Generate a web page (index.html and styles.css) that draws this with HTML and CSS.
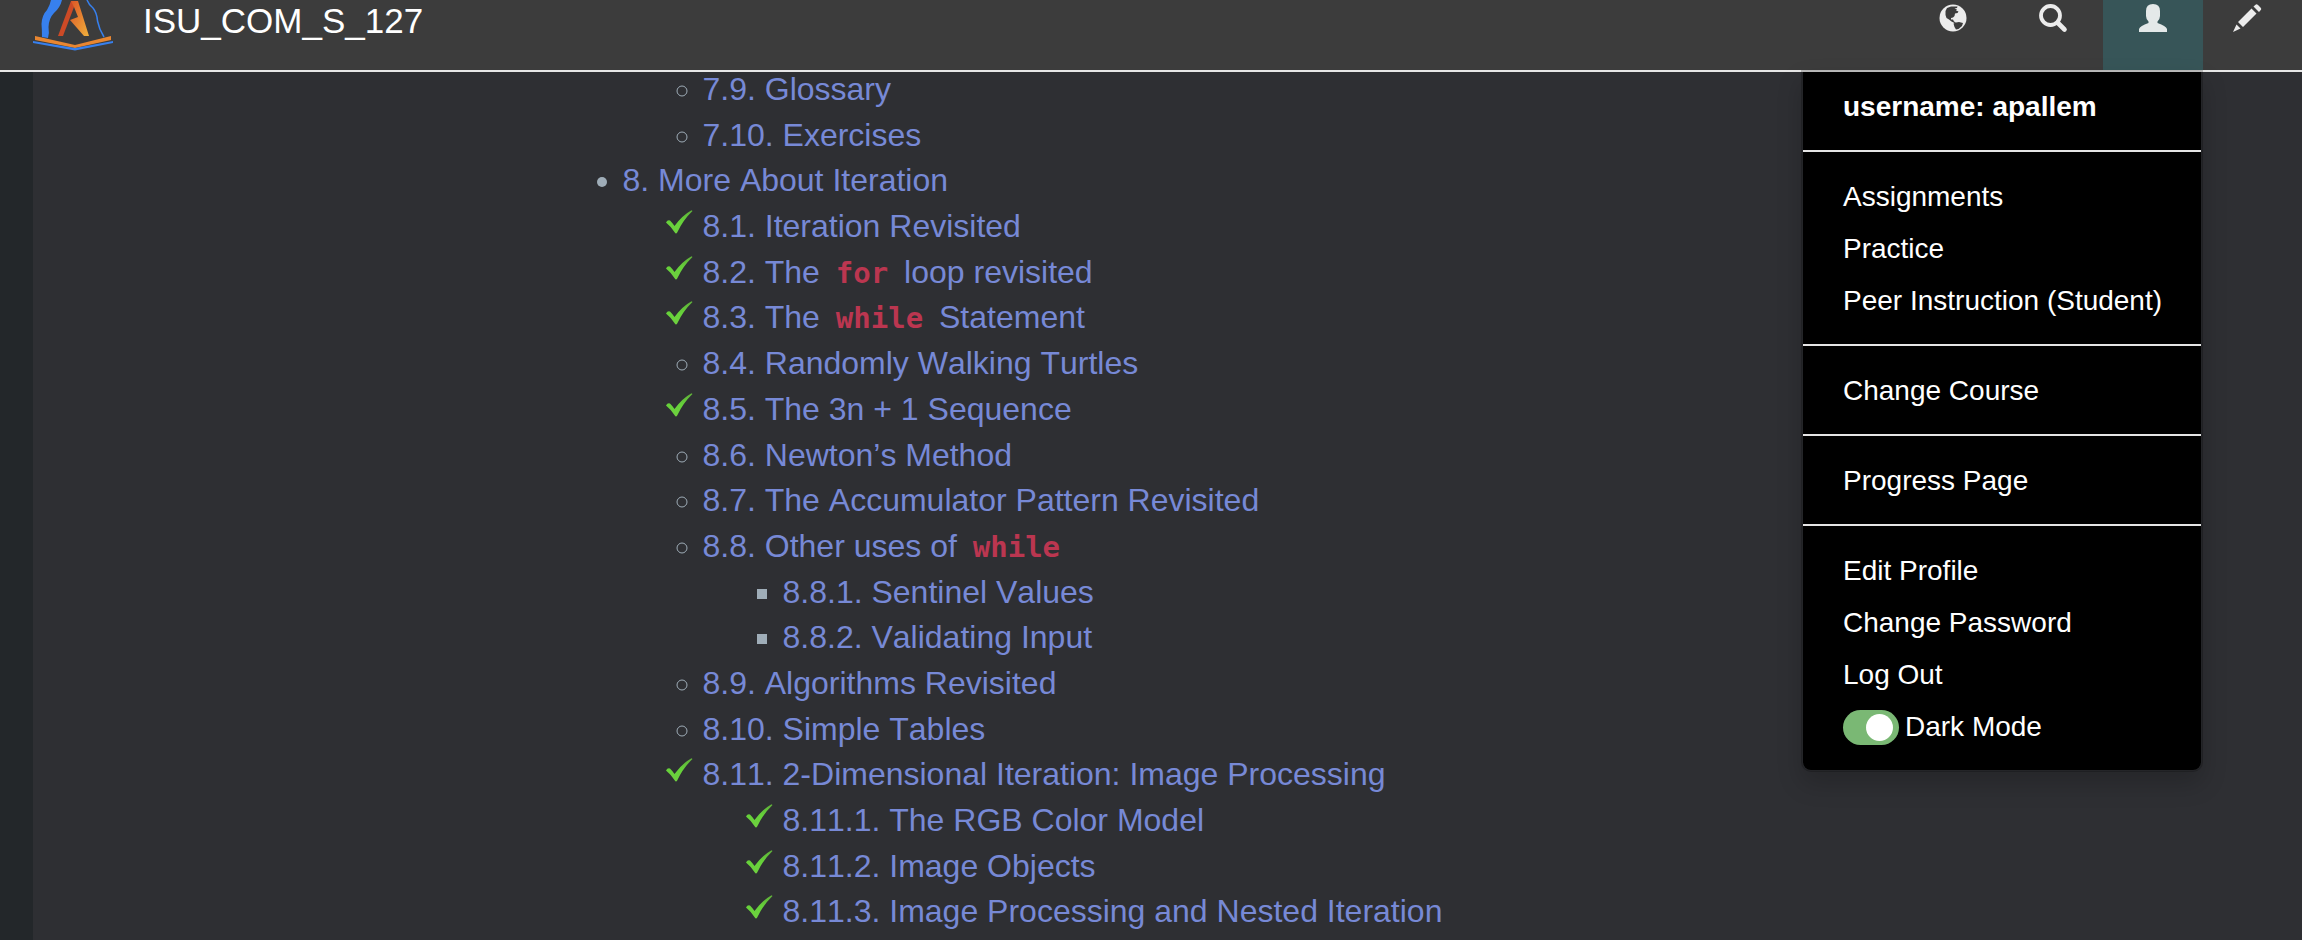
FILE: index.html
```html
<!DOCTYPE html>
<html lang="en">
<head>
<meta charset="utf-8">
<title>ISU_COM_S_127</title>
<link rel="stylesheet" href="styles.css">
</head>
<body>
<svg class="sprite" aria-hidden="true">
  <defs>
    <linearGradient id="check-fill" x1="0" y1="0" x2="0" y2="1">
      <stop offset="0" stop-color="#5fae3a"/>
      <stop offset="0.5" stop-color="#66d23a"/>
      <stop offset="1" stop-color="#6fd040"/>
    </linearGradient>
    <symbol id="check" viewBox="0 0 28 26">
      <path fill="url(#check-fill)" d="M1 13.500Q2.500 10.500 5 11.500Q7.500 14 9.500 17Q17 6.500 26.500 1.200L27.500 2Q18 11 12.200 23.500Q11 25.500 9.800 23.500Q6 17.500 1 13.500Z"/>
    </symbol>
  </defs>
</svg>

<header class="navbar">
  <a class="brand" href="#">
    <svg class="brand-logo" viewBox="0 0 80 52" aria-hidden="true">
      <defs>
        <linearGradient id="leg" x1="0" y1="0" x2="1" y2="1">
          <stop offset="0" stop-color="#dd5526"/>
          <stop offset="1" stop-color="#efb03c"/>
        </linearGradient>
      </defs>
      <path fill="#3780ee" d="M18 0H29Q27 8 21 13Q16 18 15.500 27Q16.500 33 15 38L9 37Q9 30 8.500 24Q9 15 14 10Q17 5 18 0Z"/>
      <path fill="none" stroke="#3780ee" stroke-width="1.500" d="M54 0Q56 5 60 8Q64 13 64.500 21Q66 29 71 37"/>
      <path fill="#cc4a26" d="M38 1H43L41 7L30 36H25Z"/>
      <path fill="url(#leg)" d="M38 1H45L56 36H51L37 20L45 17L41 7Z"/>
      <path fill="#e88631" d="M2 36L42 45L78 36V40L42 48L2 40Z"/>
      <path fill="#3780ee" d="M0 41L42 48L80 41V43L42 50.500L0 43Z"/>
    </svg>
    <span>ISU_COM_S_127</span>
  </a>
  <nav class="tools" aria-label="Tools">
    <button class="tool" type="button" aria-label="Social">
      <svg viewBox="0 0 28 28" aria-hidden="true">
        <circle cx="14" cy="14" r="13.500" fill="#ececec"/>
        <path fill="#3c3c3c" d="M8 4L12 2.500L18.500 2.500L18 4L15.500 4.500L18 5.500L17 6.500L19.500 7.500L18.500 9L16 9.500L15.500 12L14 13.500L12 14L12 15.500L14 15.500L15 17.500L17 18.500L15.500 19L12.500 17.500L10 15.500L7.500 14L6.500 11L6.500 7Z"/>
        <path fill="#3c3c3c" d="M14.500 19.500L17 18.500L20 18L24 19L23 22L19.500 25L17 25.500L15.500 23Z"/>
      </svg>
    </button>
    <button class="tool" type="button" aria-label="Search">
      <svg viewBox="0 0 28 28" aria-hidden="true">
        <circle cx="11.500" cy="11.500" r="9.500" fill="none" stroke="#ececec" stroke-width="3.800"/>
        <path fill="none" stroke="#ececec" stroke-width="4.600" stroke-linecap="round" d="M19 19L25.500 25.500"/>
      </svg>
    </button>
    <button class="tool tool-open" type="button" aria-label="User menu" aria-expanded="true">
      <svg viewBox="0 0 28 28" aria-hidden="true">
        <path fill="#e4e9e9" d="M7 7Q7 0 14 0Q21 0 21 7V12Q21 15 18.500 17.500V19Q27 22 28 25V28H0V25Q1 22 9.500 19V17.500Q7 15 7 12Z"/>
      </svg>
    </button>
    <button class="tool tool-end" type="button" aria-label="Scratch activity">
      <svg viewBox="0 0 28 28" aria-hidden="true">
        <path fill="#ececec" d="M22.500 0.800Q23.500-0.500 25 1L27.500 3.500Q29 5 27.800 6L26 8L20.500 2.500ZM18.500 4.500L23.500 9.500L10 23L5 18ZM3.500 20.500L7.500 24.500L0 28Z"/>
      </svg>
    </button>
  </nav>
</header>

<div class="menu">
  <ul class="menu-group"><li class="menu-name">username: apallem</li></ul>
  <ul class="menu-group">
    <li><a href="#">Assignments</a></li>
    <li><a href="#">Practice</a></li>
    <li><a href="#">Peer Instruction (Student)</a></li>
  </ul>
  <ul class="menu-group"><li><a href="#">Change Course</a></li></ul>
  <ul class="menu-group"><li><a href="#">Progress Page</a></li></ul>
  <ul class="menu-group">
    <li><a href="#">Edit Profile</a></li>
    <li><a href="#">Change Password</a></li>
    <li><a href="#">Log Out</a></li>
    <li><label class="switch"><input type="checkbox" role="switch" checked>Dark Mode</label></li>
  </ul>
</div>

<main class="page">
  <ul class="toc">
    <li class="chapter-rest">
      <ul>
        <li><a href="#">7.9. Glossary</a></li>
        <li><a href="#">7.10. Exercises</a></li>
      </ul>
    </li>
    <li><a href="#">8. More About Iteration</a>
      <ul>
        <li class="done"><svg class="check"><use href="#check"/></svg><a href="#">8.1. Iteration Revisited</a></li>
        <li class="done"><svg class="check"><use href="#check"/></svg><a href="#">8.2. The <code>for</code> loop revisited</a></li>
        <li class="done"><svg class="check"><use href="#check"/></svg><a href="#">8.3. The <code>while</code> Statement</a></li>
        <li><a href="#">8.4. Randomly Walking Turtles</a></li>
        <li class="done"><svg class="check"><use href="#check"/></svg><a href="#">8.5. The 3n + 1 Sequence</a></li>
        <li><a href="#">8.6. Newton’s Method</a></li>
        <li><a href="#">8.7. The Accumulator Pattern Revisited</a></li>
        <li><a href="#">8.8. Other uses of <code>while</code></a>
          <ul>
            <li><a href="#">8.8.1. Sentinel Values</a></li>
            <li><a href="#">8.8.2. Validating Input</a></li>
          </ul>
        </li>
        <li><a href="#">8.9. Algorithms Revisited</a></li>
        <li><a href="#">8.10. Simple Tables</a></li>
        <li class="done"><svg class="check"><use href="#check"/></svg><a href="#">8.11. 2-Dimensional Iteration: Image Processing</a>
          <ul>
            <li class="done"><svg class="check"><use href="#check"/></svg><a href="#">8.11.1. The RGB Color Model</a></li>
            <li class="done"><svg class="check"><use href="#check"/></svg><a href="#">8.11.2. Image Objects</a></li>
            <li class="done"><svg class="check"><use href="#check"/></svg><a href="#">8.11.3. Image Processing and Nested Iteration</a></li>
          </ul>
        </li>
      </ul>
    </li>
  </ul>
</main>
</body>
</html>
```

FILE: styles.css
```css
* {
  box-sizing: border-box;
}

body {
  margin: 0;
  background: #23272a;
  color: #9fadb8;
  font-family: "Liberation Sans", Arial, Helvetica, sans-serif;
  font-size: 32px;
  line-height: 1.428;
}

a {
  color: #7789d6;
  text-decoration: none;
}

ul {
  margin: 0;
  padding: 0;
}

.sprite {
  display: block;
  width: 0;
  height: 0;
}

.navbar {
  display: flex;
  justify-content: space-between;
  height: 72px;
  background: #3c3c3c;
  border-bottom: 2px solid #e7e7e7;
}

.brand {
  display: flex;
  gap: 30px;
  padding-left: 33px;
  color: #fff;
  font-size: 35px;
  line-height: 42px;
}

.brand-logo {
  width: 80px;
  height: 52px;
}

.tools {
  display: flex;
}

.tool {
  width: 100px;
  padding: 4px 0 0;
  border: 0;
  background: none;
  display: flex;
  justify-content: center;
  align-items: flex-start;
}

.tool svg {
  width: 28px;
  height: 28px;
  overflow: visible;
}

.tool-open {
  background: #375558;
}

.tool-end {
  width: 99px;
  justify-content: flex-start;
  padding-left: 30px;
}

.menu {
  position: absolute;
  top: 70px;
  right: 99px;
  width: 402px;
  border: 2px solid rgba(0, 0, 0, 0.2);
  border-radius: 0 0 10px 10px;
  background: #000;
  background-clip: padding-box;
  box-shadow: 0 12px 24px rgba(0, 0, 0, 0.18);
  font-size: 28px;
  line-height: 40px;
}

.menu-group {
  padding: 19px 40px 17px;
  list-style: none;
}

.menu-group:first-child {
  padding-top: 9px;
}

.menu-group + .menu-group {
  border-top: 2px solid #e5e5e5;
}

.menu-group li {
  padding: 6px 0;
  white-space: nowrap;
}

.menu-group a,
.menu-name {
  color: #fff;
}

.menu-name {
  font-weight: bold;
}

.switch {
  display: flex;
  align-items: center;
  gap: 6px;
  color: #fff;
}

.switch input {
  appearance: none;
  display: flex;
  justify-content: flex-end;
  width: 56px;
  height: 35px;
  margin: 0;
  padding: 4px 6px;
  border-radius: 18px;
  background: #7ab874;
}

.switch input::before {
  content: "";
  width: 27px;
  height: 27px;
  border-radius: 50%;
  background: #fff;
}

.page {
  margin-left: 33px;
  padding-left: 25%;
  padding-bottom: 10px;
  background: #2e2f33;
}

/* The page is scrolled, so the first row sits partly under the navbar. */
.toc {
  margin: 0;
  padding-left: 14px;
  list-style: disc;
  font-kerning: none;
}

.page {
  margin-top: -5px;
}

.navbar {
  position: relative;
}

.toc ul {
  padding-left: 80px;
  list-style: circle;
}

.toc ul ul {
  list-style: square;
}

.toc li.done {
  display: block;
}

.toc .chapter-rest {
  list-style: none;
}

.check {
  width: 28px;
  height: 26px;
  margin-left: -38px;
  margin-right: 10px;
  vertical-align: 2px;
}

code {
  padding: 3px 7px;
  color: #bb3650;
  font-family: "DejaVu Sans Mono", monospace;
  font-size: 29px;
  font-weight: bold;
  line-height: 1;
}
```
